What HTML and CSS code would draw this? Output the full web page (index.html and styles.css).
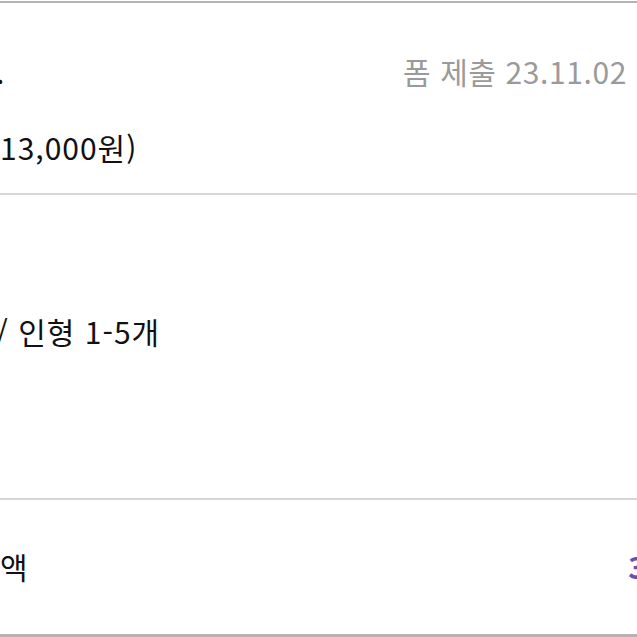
FILE: index.html
```html
<!DOCTYPE html>
<html lang="ko">
<head>
    <meta charset="UTF-8">
    <meta name="viewport" content="width=device-width, initial-scale=1.0">
    <title>주문 상세</title>
    <link rel="stylesheet" href="styles.css">
</head>
<body>
    <div class="sheet">
        <section class="block summary">
            <div class="row">
                <span class="label cut">.</span>
                <span class="date">폼 제출 23.11.02</span>
            </div>
            <div class="row">
                <span class="label">13,000원)</span>
            </div>
        </section>

        <section class="block option">
            <div class="row">
                <span class="label cut-slash">/ 인형 1-5개</span>
            </div>
        </section>

        <section class="block total">
            <div class="row">
                <span class="label">액</span>
                <span class="amount">3</span>
            </div>
        </section>
    </div>
</body>
</html>
```

FILE: styles.css
```css
body {
    margin: 0;
    font-family: "Noto Sans CJK KR", "Noto Sans", sans-serif;
    background: #fff;
    color: #111;
    overflow: hidden;
}
.sheet {
    width: 637px;
    margin-top: 1px;
    border-top: 2px solid #b3b3b3;
}
.block {
    border-bottom: 2px solid #d6d6d6;
}
.row {
    display: flex;
    justify-content: space-between;
    align-items: center;
    height: 40px;
    font-size: 30px;
    line-height: 40px;
    letter-spacing: 1px;
}
.summary {
    padding: 48px 0 26px;
    display: flex;
    flex-direction: column;
    gap: 36px;
}
.option {
    padding: 116px 0 147px;
}
.total {
    padding: 46px 0 48px;
    border-bottom: 3px solid #b3b3b3;
}
.cut {
    margin-left: -4px;
}
.cut-slash {
    margin-left: -4px;
}
.date {
    color: #9a9a9a;
    font-size: 30px;
    letter-spacing: 0.6px;
    margin-right: 10px;
}
.amount {
    color: #6a4fb6;
    font-weight: 700;
    margin-right: -10px;
}
```
